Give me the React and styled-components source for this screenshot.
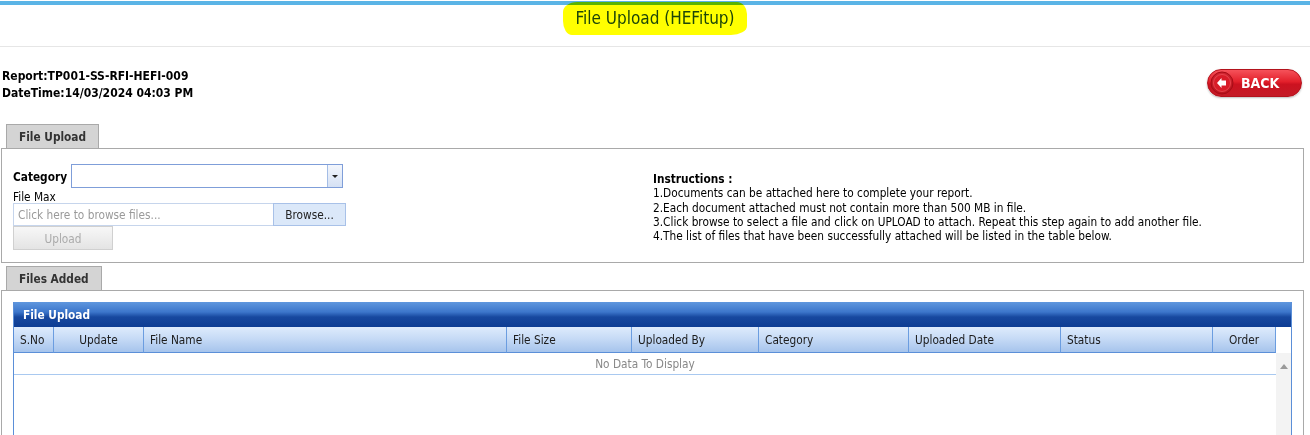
import React from "react";
import styled, { createGlobalStyle } from "styled-components";

const GlobalStyle = createGlobalStyle`
    html, body {
        margin: 0;
        padding: 0;
        overflow: hidden;
        background: #fff;
    }
    body {
        font-family: "DejaVu Sans Condensed", "Liberation Sans", sans-serif;
        font-size: 11.75px;
        color: #000;
    }
`;

const Page = styled.div`
    width: 1310px;
`;

const TopLine = styled.div`
    height: 4px;
    margin-top: 1px;
    background: #5ab4e6;
`;

const TitleBar = styled.div`
    height: 41px;
    border-bottom: 1px solid #e6e6e6;
    display: flex;
    justify-content: center;
    align-items: flex-start;
`;

const Title = styled.span`
    margin-top: -3px;
    padding: 6px 12px 6px 12px;
    line-height: 21px;
    font-size: 17px;
    color: #1d4608;
    background: #ffff00;
    border-radius: 14px 10px 16px 9px / 10px 12px 9px 14px;
    mix-blend-mode: multiply;
`;

const ReportRow = styled.div`
    display: flex;
    justify-content: space-between;
    align-items: flex-start;
    padding: 20px 8px 0 2px;
`;

const ReportInfo = styled.div`
    padding-top: 1px;
    font-weight: bold;
    font-size: 12px;
    line-height: 17px;
`;

const BackButton = styled.button`
    margin-top: 2px;
    width: 95px;
    height: 28px;
    display: flex;
    align-items: center;
    gap: 7px;
    padding: 0 0 0 2px;
    border: 1px solid #b3121c;
    border-radius: 14px;
    background: linear-gradient(#f5525a 0%, #e3202b 45%, #cc1220 55%, #c41a26 100%);
    box-shadow: 0 1px 2px rgba(0, 0, 0, 0.25);
    color: #fff;
    font-family: "DejaVu Sans Condensed", "Liberation Sans", sans-serif;
    font-weight: bold;
    font-size: 14px;
    cursor: pointer;
`;

const Section = styled.section`
    margin: ${p => p.$top}px 6px 0 1px;
`;

const Tab = styled.div`
    display: inline-block;
    box-sizing: border-box;
    margin-left: 5px;
    height: 24px;
    line-height: 25px;
    padding: 0 ${p => p.$pad}px;
    border: 1px solid #a9a9a9;
    border-bottom: none;
    background: #d4d4d4;
    color: #333;
    font-weight: bold;
    vertical-align: bottom;
`;

const Panel = styled.div`
    border: 1px solid #a9a9a9;
    padding: ${p => p.$pad};
`;

const UploadGrid = styled.div`
    display: grid;
    grid-template-columns: 640px 1fr;
`;

const FormCol = styled.div`
    display: flex;
    flex-direction: column;
    align-items: flex-start;
`;

const CategoryRow = styled.div`
    display: flex;
    align-items: center;
    height: 24px;
`;

const Label = styled.span`
    box-sizing: border-box;
    font-weight: ${p => (p.$bold ? "bold" : "normal")};
    width: ${p => p.$width || "auto"};
    height: ${p => p.$height || "auto"};
    padding-top: ${p => p.$top || 0}px;
    line-height: ${p => p.$lh || 15}px;
`;

const Select = styled.div`
    box-sizing: border-box;
    width: 272px;
    height: 24px;
    border: 1px solid #7f9ed9;
    display: flex;
    justify-content: flex-end;
`;

const SelectArrow = styled.div`
    width: 14px;
    border-left: 1px solid #a4bde6;
    background: linear-gradient(#f3f6fc, #d5e1f4);
    display: flex;
    align-items: center;
    justify-content: center;

    &::after {
        content: "";
        border-left: 3px solid transparent;
        border-right: 3px solid transparent;
        border-top: 3px solid #222;
    }
`;

const FileRow = styled.div`
    display: flex;
    height: 23px;
`;

const FileInput = styled.div`
    box-sizing: border-box;
    width: 260px;
    border: 1px solid #c6d5ec;
    border-right: none;
    padding-left: 4px;
    line-height: 23px;
    color: #9a9a9a;
`;

const BrowseButton = styled.div`
    box-sizing: border-box;
    width: 73px;
    border: 1px solid #a8c1e8;
    background: #dbe8f9;
    text-align: center;
    line-height: 22px;
    color: #222;
`;

const UploadButton = styled.div`
    box-sizing: border-box;
    width: 100px;
    height: 24px;
    border: 1px solid #d0d0d0;
    background: linear-gradient(#f7f7f7, #e4e4e4);
    color: #ababab;
    text-align: center;
    line-height: 24px;
`;

const Instructions = styled.div`
    margin-top: 8px;
    line-height: 14.25px;
    color: #000;

    strong {
        font-weight: bold;
    }
`;

const cols = "40px 90px 363px 125px 127px 150px 152px 152px 63px";

const DataGrid = styled.div`
    border-left: 1px solid #5b8fd8;
    border-right: 1px solid #5b8fd8;
`;

const GridTitle = styled.div`
    height: 25px;
    line-height: 27px;
    padding-left: 9px;
    background: linear-gradient(#5f97de 0%, #3c76cb 40%, #17489f 60%, #0d3c93 100%);
    color: #fff;
    font-weight: bold;
`;

const HeaderRow = styled.div`
    display: grid;
    grid-template-columns: ${cols} 1fr;
`;

const HeadCell = styled.div`
    box-sizing: border-box;
    height: 26px;
    padding-top: 2px;
    line-height: 23px;
    padding-left: ${p => (p.$center ? 0 : 6)}px;
    text-align: ${p => (p.$center ? "center" : "left")};
    border-right: 1px solid #6b9de0;
    border-bottom: 1px solid #5b8fd8;
    background: linear-gradient(#deebfc 0%, #c7dbf6 45%, #a6c4ec 100%);
    color: #1c1c1c;
`;

const GridBody = styled.div`
    display: grid;
    grid-template-columns: 1262px 1fr;
    height: 110px;
`;

const NoData = styled.div`
    height: 21px;
    line-height: 23px;
    text-align: center;
    color: #888;
    border-bottom: 1px solid #a9c9f0;
`;

const ScrollTrack = styled.div`
    background: #f3f3f3;
    display: flex;
    justify-content: center;
    padding-top: 11px;

    &::before {
        content: "";
        height: 0;
        border-left: 4px solid transparent;
        border-right: 4px solid transparent;
        border-bottom: 5px solid #9a9a9a;
    }
`;

const BackIcon = () => (
    <svg width="24" height="24" viewBox="0 0 24 24">
        <defs>
            <radialGradient id="bk" cx="50%" cy="40%" r="60%">
                <stop offset="0%" stopColor="#f0424c" />
                <stop offset="100%" stopColor="#b50f1a" />
            </radialGradient>
        </defs>
        <circle cx="12" cy="12" r="11" fill="url(#bk)" stroke="#a80c16" strokeWidth="1" />
        <circle cx="12" cy="12" r="8.5" fill="#d81c28" stroke="#ec4c55" strokeWidth="0.8" />
        <path d="M7 12 L11.5 7 L11.5 9.5 L16 9.5 L16 14.5 L11.5 14.5 L11.5 17 Z" fill="#fff" />
    </svg>
);

const headers = [
    { label: "S.No" },
    { label: "Update", center: true },
    { label: "File Name" },
    { label: "File Size" },
    { label: "Uploaded By" },
    { label: "Category" },
    { label: "Uploaded Date" },
    { label: "Status" },
    { label: "Order", center: true },
];

const App = () => {
    return (
        <Page>
            <GlobalStyle />
            <TopLine />
            <TitleBar>
                <Title>File Upload (HEFitup)</Title>
            </TitleBar>

            <ReportRow>
                <ReportInfo>
                    <div>Report:TP001-SS-RFI-HEFI-009</div>
                    <div>DateTime:14/03/2024 04:03 PM</div>
                </ReportInfo>
                <BackButton>
                    <BackIcon />
                    BACK
                </BackButton>
            </ReportRow>

            <Section $top={22}>
                <Tab $pad={12}>File Upload</Tab>
                <Panel $pad="15px 11px 12px 11px">
                    <UploadGrid>
                        <FormCol>
                            <CategoryRow>
                                <Label $bold $width="58px" $top={3}>Category</Label>
                                <Select>
                                    <SelectArrow />
                                </Select>
                            </CategoryRow>
                            <Label $height="15px" $top={4} $lh={11}>File Max</Label>
                            <FileRow>
                                <FileInput>Click here to browse files...</FileInput>
                                <BrowseButton>Browse...</BrowseButton>
                            </FileRow>
                            <UploadButton>Upload</UploadButton>
                        </FormCol>
                        <Instructions>
                            <strong>Instructions :</strong>
                            <div>1.Documents can be attached here to complete your report.</div>
                            <div>2.Each document attached must not contain more than 500 MB in file.</div>
                            <div>3.Click browse to select a file and click on UPLOAD to attach. Repeat this step again to add another file.</div>
                            <div>4.The list of files that have been successfully attached will be listed in the table below.</div>
                        </Instructions>
                    </UploadGrid>
                </Panel>
            </Section>

            <Section $top={3}>
                <Tab $pad={12}>Files Added</Tab>
                <Panel $pad="11px 11px 0 11px">
                    <DataGrid>
                        <GridTitle>File Upload</GridTitle>
                        <HeaderRow>
                            {headers.map(h => (
                                <HeadCell key={h.label} $center={h.center}>{h.label}</HeadCell>
                            ))}
                        </HeaderRow>
                        <GridBody>
                            <div>
                                <NoData>No Data To Display</NoData>
                            </div>
                            <ScrollTrack />
                        </GridBody>
                    </DataGrid>
                </Panel>
            </Section>
        </Page>
    );
};

export default App;
